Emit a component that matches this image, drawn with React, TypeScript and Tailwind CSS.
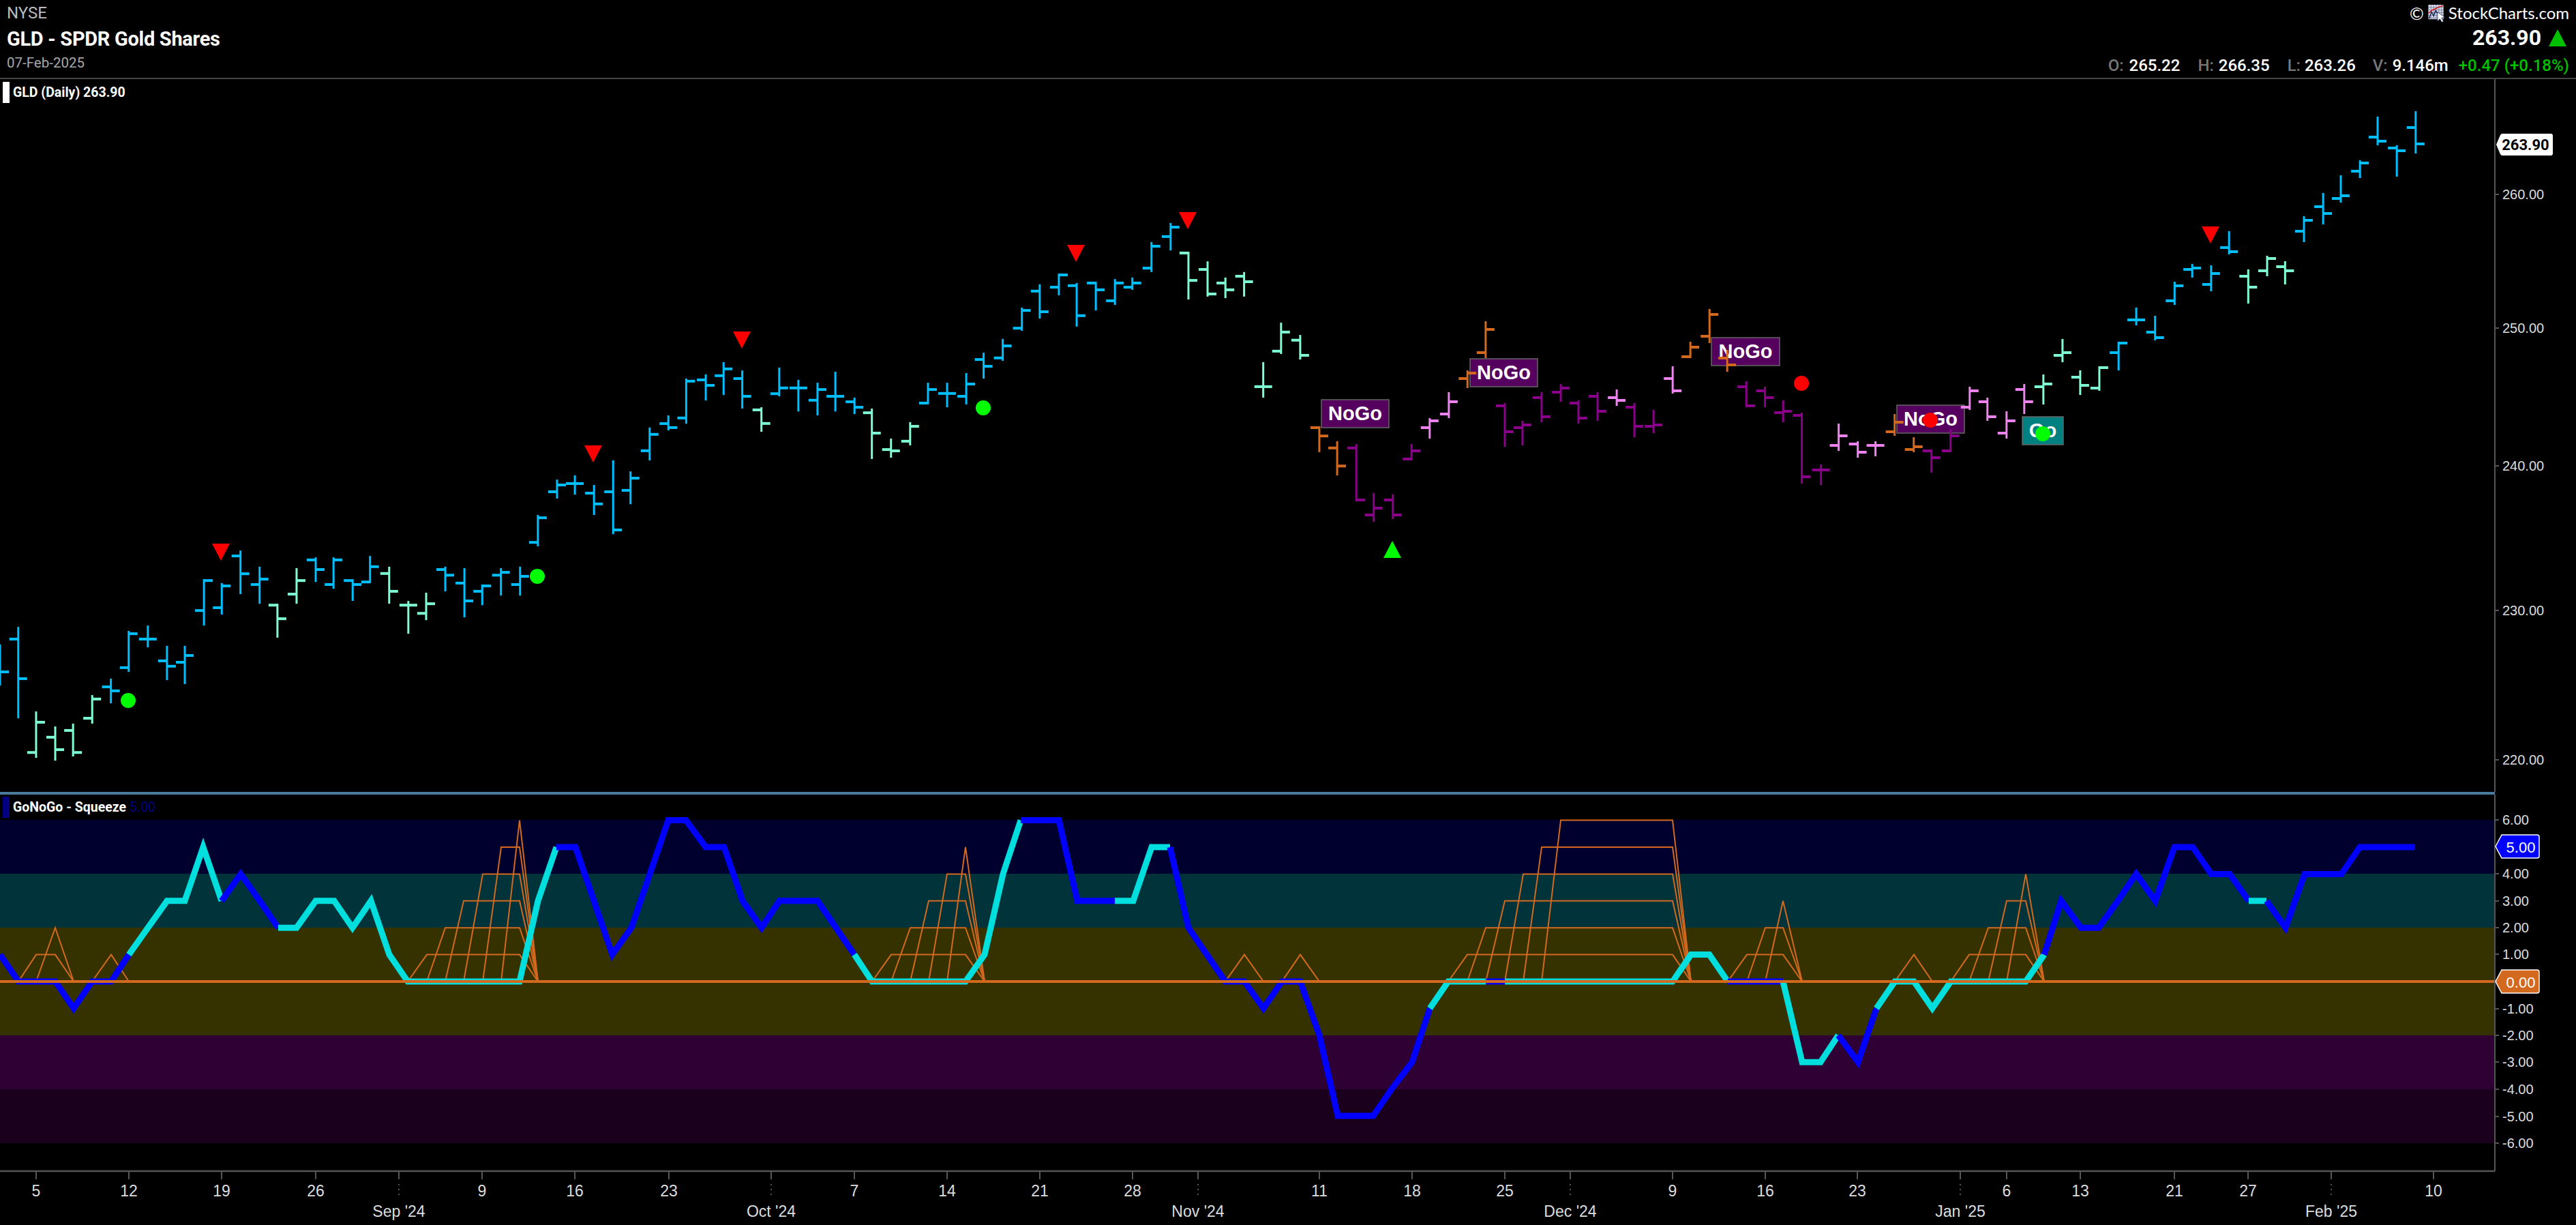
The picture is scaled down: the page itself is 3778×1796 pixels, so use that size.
const BLUE = "#00bfff";
const AQUA = "#7fffd4";
const ORANGE = "#d2691e";
const PURPLE = "#8b008b";
const VIOLET = "#ee82ee";

type Row = [number, number, number, number, number, string];

// bars were read off crops of the chart: [x, high, low, open, close, colour], scaled back to page pixels
const scaleRows = (ox: number, oy: number, fx: number, fy: number, rows: Row[]): Row[] =>
  rows.map(([x, h, l, o, c, col]) => [ox + x / fx, oy + h / fy, oy + l / fy, oy + o / fy, oy + c / fy, col]);

const bars: Row[] = [
  ...scaleRows(0, 500, 1.568, 2.412, [
    [0, 1073, 1218, 1170, 1170, BLUE],
    [42, 1011, 1334, 1054, 1194, BLUE],
    [83, 1310, 1474, 1455, 1348, AQUA],
    [127, 1363, 1484, 1401, 1445, AQUA],
    [168, 1353, 1469, 1377, 1455, AQUA],
    [212, 1252, 1353, 1334, 1266, AQUA],
    [255, 1194, 1281, 1223, 1237, BLUE],
    [296, 1025, 1170, 1155, 1035, BLUE],
    [340, 1006, 1083, 1054, 1054, BLUE],
    [384, 1078, 1199, 1131, 1150, BLUE],
    [425, 1078, 1213, 1136, 1112, BLUE],
    [469, 842, 1006, 953, 847, BLUE],
    [510, 856, 967, 943, 866, BLUE],
    [553, 741, 895, 760, 823, BLUE],
    [597, 798, 929, 861, 842, BLUE],
    [638, 929, 1049, 934, 982, AQUA],
    [682, 803, 929, 895, 847, AQUA],
    [726, 765, 852, 774, 808, BLUE],
    [767, 765, 876, 861, 774, BLUE],
    [811, 842, 919, 847, 861, BLUE],
    [851, 760, 856, 852, 798, BLUE],
    [895, 798, 929, 822, 885, AQUA],
    [939, 919, 1035, 934, 934, AQUA],
    [980, 890, 987, 963, 929, AQUA],
    [1024, 798, 885, 808, 828, BLUE],
    [1068, 803, 977, 856, 919, BLUE],
    [1109, 861, 934, 885, 866, BLUE],
    [1152, 803, 900, 828, 818, BLUE],
    [1196, 798, 900, 861, 832, BLUE],
    [1237, 615, 726, 712, 625, BLUE],
    [1281, 490, 557, 533, 509, BLUE],
    [1322, 475, 543, 504, 504, BLUE],
    [1366, 509, 615, 538, 576, BLUE],
    [1410, 422, 683, 533, 668, BLUE],
    [1450, 461, 577, 528, 485, BLUE],
    [1494, 306, 422, 388, 330, BLUE],
    [1537, 263, 316, 292, 306, BLUE],
  ]),
  ...scaleRows(1000, 250, 1.568, 2.613, [
    [10, 797, 970, 948, 807, BLUE],
    [55, 781, 881, 802, 823, BLUE],
    [96, 734, 860, 786, 760, BLUE],
    [139, 766, 912, 797, 865, BLUE],
    [183, 907, 1001, 917, 969, AQUA],
    [224, 755, 865, 855, 833, BLUE],
    [268, 802, 923, 833, 833, BLUE],
    [312, 813, 938, 880, 839, BLUE],
    [353, 771, 923, 865, 865, BLUE],
    [397, 870, 933, 886, 907, BLUE],
    [437, 912, 1105, 928, 1006, AQUA],
    [481, 1027, 1100, 1069, 1074, AQUA],
    [525, 964, 1053, 1037, 980, AQUA],
    [566, 813, 896, 891, 839, BLUE],
    [610, 813, 907, 854, 854, BLUE],
    [654, 776, 896, 865, 818, BLUE],
    [694, 698, 797, 724, 750, BLUE],
    [738, 645, 729, 718, 672, BLUE],
    [782, 525, 614, 604, 536, BLUE],
    [823, 436, 567, 462, 541, BLUE],
    [867, 395, 478, 447, 400, BLUE],
    [908, 431, 598, 441, 556, BLUE],
    [952, 426, 536, 431, 457, BLUE],
    [996, 416, 515, 499, 431, BLUE],
    [1036, 410, 457, 447, 431, BLUE],
    [1080, 274, 389, 374, 290, BLUE],
    [1124, 201, 306, 253, 217, BLUE],
    [1165, 311, 494, 316, 421, AQUA],
    [1209, 348, 483, 379, 473, AQUA],
    [1250, 410, 489, 431, 457, AQUA],
    [1293, 389, 483, 405, 426, AQUA],
    [1337, 734, 870, 828, 828, AQUA],
    [1378, 583, 703, 692, 619, AQUA],
    [1422, 630, 724, 650, 708, AQUA],
    [1466, 980, 1079, 985, 1017, ORANGE],
    [1507, 1037, 1168, 1063, 1132, ORANGE],
    [1551, 1048, 1267, 1063, 1262, PURPLE],
  ]),
  ...scaleRows(2000, 350, 1.4255, 3, [
    [21, 1119, 1245, 1215, 1185, PURPLE],
    [61, 1125, 1233, 1149, 1215, PURPLE],
    [100, 903, 975, 969, 933, PURPLE],
    [138, 789, 879, 831, 801, VIOLET],
    [178, 675, 789, 771, 717, VIOLET],
    [217, 579, 657, 615, 591, ORANGE],
    [255, 363, 525, 501, 399, ORANGE],
    [295, 723, 915, 735, 849, PURPLE],
    [332, 801, 909, 831, 819, PURPLE],
    [372, 675, 807, 699, 783, PURPLE],
    [412, 639, 717, 675, 657, PURPLE],
    [449, 711, 813, 723, 789, PURPLE],
    [489, 675, 801, 693, 759, PURPLE],
    [529, 663, 735, 699, 711, VIOLET],
    [566, 723, 873, 741, 825, PURPLE],
    [606, 753, 855, 825, 819, PURPLE],
    [646, 561, 681, 615, 669, VIOLET],
    [683, 453, 525, 519, 477, ORANGE],
    [723, 309, 459, 429, 333, ORANGE],
    [760, 489, 585, 525, 555, ORANGE],
    [800, 627, 741, 651, 735, PURPLE],
    [839, 651, 741, 669, 699, PURPLE],
    [877, 711, 807, 765, 759, PURPLE],
    [916, 765, 1077, 777, 1047, PURPLE],
    [956, 993, 1083, 1017, 1017, PURPLE],
    [993, 813, 933, 909, 867, VIOLET],
    [1033, 891, 963, 903, 939, VIOLET],
    [1070, 891, 957, 909, 909, VIOLET],
    [1110, 771, 867, 849, 807, ORANGE],
    [1150, 873, 939, 927, 915, ORANGE],
    [1187, 927, 1029, 933, 963, PURPLE],
    [1227, 837, 939, 933, 867, PURPLE],
    [1267, 651, 753, 741, 669, VIOLET],
    [1304, 699, 801, 717, 783, VIOLET],
    [1344, 759, 879, 855, 801, VIOLET],
    [1381, 639, 771, 663, 717, VIOLET],
    [1421, 597, 729, 651, 639, AQUA],
    [1461, 441, 543, 513, 501, AQUA],
    [1498, 579, 687, 609, 645, AQUA],
    [1538, 561, 669, 657, 567, AQUA],
  ]),
  ...scaleRows(3000, 100, 2.24, 3, [
    [240, 1203, 1329, 1251, 1209, BLUE],
    [298, 1053, 1131, 1107, 1107, BLUE],
    [360, 1089, 1197, 1161, 1185, BLUE],
    [424, 939, 1041, 1023, 957, BLUE],
    [482, 861, 921, 885, 879, BLUE],
    [544, 867, 981, 951, 903, BLUE],
    [603, 717, 819, 789, 807, BLUE],
    [666, 885, 1035, 915, 963, AQUA],
    [728, 825, 915, 891, 837, AQUA],
    [787, 849, 951, 873, 891, AQUA],
    [849, 651, 765, 717, 669, BLUE],
    [912, 549, 687, 609, 639, BLUE],
    [970, 471, 591, 573, 561, BLUE],
    [1033, 405, 483, 453, 417, BLUE],
    [1091, 213, 339, 303, 321, BLUE],
    [1154, 339, 477, 351, 363, BLUE],
    [1216, 189, 375, 261, 333, BLUE],
  ]),
];

const nogoLabels = [
  { x: 1938, y: 586, w: 99, h: 41, text: "NoGo", bg: "#55005f" },
  { x: 2156, y: 526, w: 99, h: 41, text: "NoGo", bg: "#55005f" },
  { x: 2510, y: 495, w: 100, h: 41, text: "NoGo", bg: "#55005f" },
  { x: 2782, y: 594, w: 99, h: 41, text: "NoGo", bg: "#55005f" },
  { x: 2966, y: 611, w: 60, h: 41, text: "Go", bg: "#008080" },
];

const redDown = [[324, 797], [870, 653], [1088, 486], [1578, 359], [1742, 311], [3242, 332]];
const dots = [
  [188, 1027, "#00ff00"],
  [788, 845, "#00ff00"],
  [1442, 598, "#00ff00"],
  [2642, 562, "#ff0000"],
  [2831, 616, "#ff0000"],
  [2996, 636, "#00ff00"],
] as const;

const priceTicks = [
  [260, 285],
  [250, 481],
  [240, 683],
  [230, 895],
  [220, 1114],
];

const LINE_BLUE = "#0000ff";
const LINE_CYAN = "#00dede";
const vy = (v: number) => 1439 - v * 39.4;

// oscillator: runs of [x, value], one colour per run, each run starts where the last one ended
const oscRuns: { color: string; pts: number[][] }[] = [
  { color: LINE_BLUE, pts: [[0, 1], [27, 0], [53, 0], [81, 0], [108, -1], [135, 0], [163, 0], [189, 1]] },
  { color: LINE_CYAN, pts: [[189, 1], [217, 2], [245, 3], [271, 3], [298, 5], [325, 3]] },
  { color: LINE_BLUE, pts: [[325, 3], [353, 4], [381, 3], [408, 2]] },
  {
    color: LINE_CYAN,
    pts: [[408, 2], [435, 2], [463, 3], [490, 3], [517, 2], [544, 3], [571, 1], [598, 0], [626, 0], [653, 0], [680, 0], [708, 0], [735, 0], [762, 0], [789, 3], [816, 5]],
  },
  {
    color: LINE_BLUE,
    pts: [[816, 5], [844, 5], [871, 3], [898, 1], [926, 2], [953, 4], [980, 6], [1006, 6], [1035, 5], [1062, 5], [1089, 3], [1117, 2], [1143, 3], [1171, 3], [1199, 3], [1226, 2], [1253, 1]],
  },
  { color: LINE_CYAN, pts: [[1253, 1], [1279, 0], [1307, 0], [1335, 0], [1362, 0], [1389, 0], [1416, 0], [1444, 1], [1471, 4], [1497, 6]] },
  { color: LINE_BLUE, pts: [[1497, 6], [1525, 6], [1553, 6], [1580, 3], [1608, 3], [1635, 3]] },
  { color: LINE_CYAN, pts: [[1635, 3], [1662, 3], [1689, 5], [1716, 5]] },
  {
    color: LINE_BLUE,
    pts: [[1716, 5], [1743, 2], [1770, 1], [1797, 0], [1825, 0], [1853, -1], [1880, 0], [1907, 0], [1935, -2], [1962, -5], [1989, -5], [2014, -5], [2041, -4], [2071, -3], [2097, -1]],
  },
  { color: LINE_CYAN, pts: [[2097, -1], [2124, 0], [2152, 0], [2179, 0]] },
  { color: LINE_BLUE, pts: [[2179, 0], [2207, 0]] },
  { color: LINE_CYAN, pts: [[2207, 0], [2453, 0], [2480, 1], [2507, 1], [2534, 0]] },
  { color: LINE_BLUE, pts: [[2534, 0], [2615, 0]] },
  { color: LINE_CYAN, pts: [[2615, 0], [2643, -3], [2670, -3], [2696, -2]] },
  { color: LINE_BLUE, pts: [[2696, -2], [2725, -3], [2752, -1]] },
  { color: LINE_CYAN, pts: [[2752, -1], [2779, 0], [2807, 0], [2834, -1], [2861, 0], [2971, 0], [2998, 1]] },
  {
    color: LINE_BLUE,
    pts: [[2998, 1], [3023, 3], [3052, 2], [3078, 2], [3106, 3], [3133, 4], [3161, 3], [3189, 5], [3216, 5], [3243, 4], [3270, 4], [3298, 3]],
  },
  { color: LINE_CYAN, pts: [[3298, 3], [3324, 3]] },
  { color: LINE_BLUE, pts: [[3324, 3], [3352, 2], [3380, 4], [3407, 4], [3434, 4], [3461, 5], [3489, 5], [3542, 5]] },
];

// squeeze ladders: xs[k] is where level k tops out, then flat to end, back to zero at drop
const squeezes = [
  { xs: [27, 53, 81], end: 81, drop: 108 },
  { xs: [135, 163], end: 163, drop: 189 },
  { xs: [598, 626, 653, 680, 708, 735, 762], end: 762, drop: 789 },
  { xs: [1279, 1307, 1335, 1362, 1389, 1416], end: 1416, drop: 1444 },
  { xs: [1797, 1825], end: 1825, drop: 1853 },
  { xs: [1880, 1907], end: 1907, drop: 1935 },
  { xs: [2124, 2152, 2179, 2207, 2234, 2261, 2289], end: 2453, drop: 2480 },
  { xs: [2534, 2562, 2589, 2615], end: 2615, drop: 2643 },
  { xs: [2779, 2807], end: 2807, drop: 2834 },
  { xs: [2861, 2888, 2916, 2943, 2971], end: 2971, drop: 2998 },
];

const bands = [
  { top: 1202, bottom: 1281, color: "#00002e" },
  { top: 1281, bottom: 1360, color: "#00343a" },
  { top: 1360, bottom: 1518, color: "#363200" },
  { top: 1518, bottom: 1597, color: "#2e0033" },
  { top: 1597, bottom: 1676, color: "#1b001e" },
];

const oscTicks = [
  [6, 1202],
  [4, 1281],
  [3, 1321],
  [2, 1360],
  [1, 1399],
  [-1, 1479],
  [-2, 1518],
  [-3, 1557],
  [-4, 1597],
  [-5, 1637],
  [-6, 1676],
];

const dayTicks: [number, string][] = [
  [53, "5"], [189, "12"], [325, "19"], [463, "26"], [707, "9"], [843, "16"], [981, "23"],
  [1253, "7"], [1389, "14"], [1525, "21"], [1661, "28"], [1935, "11"],
  [2071, "18"], [2207, "25"], [2453, "9"], [2589, "16"], [2724, "23"], [2943, "6"],
  [3051, "13"], [3189, "21"], [3297, "27"], [3569, "10"],
];

const monthTicks: [number, string][] = [
  [585, "Sep '24"],
  [1131, "Oct '24"],
  [1757, "Nov '24"],
  [2303, "Dec '24"],
  [2875, "Jan '25"],
  [3419, "Feb '25"],
];

function StockChartsMark() {
  return (
    <svg viewBox="0 0 26 28" className="h-[27px] w-[26px]">
      <rect x="0" y="1" width="23" height="22" fill="#d8dcec" />
      <path d="M0 5H23M0 9H23M0 13H23M0 17H23M0 21H23M4 1V23M8 1V23M12 1V23M16 1V23M20 1V23" stroke="#6a7290" strokeWidth="0.8" />
      <path d="M0 14L6 9L11 7L17 4L23 2" fill="none" stroke="#d01818" strokeWidth="1.6" />
      <path d="M1 22L5 12L8 18L11 10L15 15" fill="none" stroke="#12204c" strokeWidth="1.4" />
      <path d="M14 12L14 26L17.5 22.5L20.5 27.5L23 26L20 21L25 20Z" fill="#fff" stroke="#1a2a60" strokeWidth="0.8" />
    </svg>
  );
}

function Header() {
  return (
    <header className="flex h-[116px] shrink-0 justify-between border-b-2 border-[#444] px-[10px]">
      <div className="flex flex-col [font-family:Roboto,sans-serif]">
        <div className="mt-[3px] h-[32px] text-[24px] leading-[32px] text-[#bbbbbb]">NYSE</div>
        <div className="h-[44px] text-[29px] font-bold leading-[44px] tracking-[-0.3px] text-white">GLD - SPDR Gold Shares</div>
        <div className="h-[26px] text-[20.5px] leading-[26px] text-[#a8a8a8]">07-Feb-2025</div>
      </div>
      <div className="flex flex-col items-end [font-family:Roboto,sans-serif]">
        <div className="mt-[4px] flex h-[30px] items-center gap-[4px] [font-family:Lato,sans-serif] text-[24px] leading-[30px] text-white">
          <span className="mr-[2px] text-[25px]">©</span>
          <StockChartsMark />
          <span>StockCharts.com</span>
        </div>
        <div className="mr-[4px] mt-[3px] flex h-[36px] items-center gap-[11px]">
          <span className="text-[32px] font-bold leading-[36px] text-white">263.90</span>
          <span className="h-0 w-0 border-x-[13px] border-b-[25px] border-x-transparent border-b-[#00c000]" />
        </div>
        <div className="mt-[8px] flex h-[30px] items-center text-[24px] font-medium leading-[30px] text-white">
          <span className="text-[#777777]">O:</span>
          <span className="ml-[8px]">265.22</span>
          <span className="ml-[26px] text-[#777777]">H:</span>
          <span className="ml-[7px]">266.35</span>
          <span className="ml-[26px] text-[#777777]">L:</span>
          <span className="ml-[6px]">263.26</span>
          <span className="ml-[25px] text-[#777777]">V:</span>
          <span className="ml-[7px]">9.146m</span>
          <span className="ml-[15px] text-[#00c000]">+0.47</span>
          <span className="ml-[6px] text-[#00c000]">(+0.18%)</span>
        </div>
      </div>
    </header>
  );
}

function PricePanel() {
  return (
    <div className="relative h-[1045px] shrink-0">
      <div className="absolute left-[4px] top-[4px] flex h-[31px] items-center gap-[5px] [font-family:Roboto,sans-serif] text-[19.5px] font-bold text-white">
        <span className="h-[31px] w-[10px] bg-white" />
        <span>GLD (Daily) 263.90</span>
      </div>
      <svg viewBox="0 116 3778 1045" className="block h-[1045px] w-[3778px]">
        <line x1="3659" y1="116" x2="3659" y2="1161" stroke="#555" strokeWidth="2" />
        {priceTicks.map(([price, y]) => (
          <g key={price}>
            <line x1="3659" y1={y} x2="3665" y2={y} stroke="#555" strokeWidth="2" />
            <text x="3670" y={y + 7} className="fill-[#dddddd] text-[20px] [font-family:'Liberation_Sans',sans-serif]">
              {price.toFixed(2)}
            </text>
          </g>
        ))}
        {nogoLabels.map((label) => (
          <g key={label.x}>
            <rect x={label.x} y={label.y} width={label.w} height={label.h} fill={label.bg} stroke="#666" strokeWidth="1.5" />
            <text
              x={label.x + label.w / 2}
              y={label.y + 30}
              textAnchor="middle"
              className="fill-white text-[29px] font-bold [font-family:'Liberation_Sans',sans-serif]"
            >
              {label.text}
            </text>
          </g>
        ))}
        {bars.map(([x, h, l, o, c, color], i) => (
          <g key={i} fill={color}>
            <rect x={x - 1.5} y={h} width="3" height={l - h} />
            <rect x={x - 13} y={o - 2} width="13" height="4" />
            <rect x={x} y={c - 2} width="13" height="4" />
          </g>
        ))}
        {redDown.map(([x, y]) => (
          <polygon key={x} points={`${x - 13},${y} ${x + 13},${y} ${x},${y + 25}`} fill="#ff0000" />
        ))}
        <polygon points="2029,818 2055,818 2042,793" fill="#00ff00" />
        {dots.map(([x, y, fill]) => (
          <circle key={x} cx={x} cy={y} r="11" fill={fill} />
        ))}
        <path d="M3661 212L3667 198Q3668 196 3670 196H3741Q3744 196 3744 199V225Q3744 228 3741 228H3670Q3668 228 3667 226Z" fill="#fff" />
        <text x="3704" y="220" textAnchor="middle" className="fill-black text-[22px] font-bold [font-family:Roboto,sans-serif]">
          263.90
        </text>
      </svg>
    </div>
  );
}

function ValueTag({ y, fill, text }: { y: number; fill: string; text: string }) {
  return (
    <g>
      <path
        d={`M3660 ${y}L3669 ${y - 17}H3721Q3724 ${y - 17} 3724 ${y - 14}V${y + 14}Q3724 ${y + 17} 3721 ${y + 17}H3669Z`}
        fill={fill}
        stroke="#fff"
        strokeWidth="1.5"
      />
      <text x="3697" y={y + 9} textAnchor="middle" className="fill-white text-[22px] font-medium [font-family:'Liberation_Sans',sans-serif]">
        {text}
      </text>
    </g>
  );
}

function OscillatorPanel() {
  return (
    <div className="relative min-h-0 flex-1">
      <div className="absolute left-[4px] top-[3px] flex h-[31px] items-center gap-[5px] [font-family:Roboto,sans-serif] text-[19.5px] font-bold text-white">
        <span className="h-[31px] w-[10px] bg-[#000080]" />
        <span>GoNoGo - Squeeze</span>
        <span className="font-normal text-[#000080]">5.00</span>
      </div>
      <svg viewBox="0 1165 3778 631" className="block h-[631px] w-[3778px]">
        {bands.map((band) => (
          <rect key={band.top} x="0" y={band.top} width="3659" height={band.bottom - band.top} fill={band.color} />
        ))}
        {squeezes.flatMap((sq) =>
          sq.xs.slice(1).map((x, k) => (
            <polyline
              key={`${sq.xs[0]}-${k}`}
              points={`${sq.xs[k]},${vy(0)} ${x},${vy(k + 1)} ${sq.end},${vy(k + 1)} ${sq.drop},${vy(0)}`}
              fill="none"
              stroke={ORANGE}
              strokeWidth="2"
            />
          )),
        )}
        {oscRuns.map((run, i) => (
          <polyline
            key={i}
            points={run.pts.map(([x, v]) => `${x},${vy(v)}`).join(" ")}
            fill="none"
            stroke={run.color}
            strokeWidth="9"
            strokeLinejoin="miter"
            strokeMiterlimit="10"
          />
        ))}
        <line x1="0" y1={vy(0)} x2="3659" y2={vy(0)} stroke={ORANGE} strokeWidth="4" />
        <line x1="3659" y1="1165" x2="3659" y2="1717" stroke="#555" strokeWidth="2" />
        <line x1="0" y1="1717" x2="3659" y2="1717" stroke="#555" strokeWidth="2.5" />
        {oscTicks.map(([v, y]) => (
          <g key={v}>
            <line x1="3659" y1={y} x2="3665" y2={y} stroke="#555" strokeWidth="2" />
            <text x="3670" y={y + 7} className="fill-[#dddddd] text-[20px] [font-family:'Liberation_Sans',sans-serif]">
              {v.toFixed(2)}
            </text>
          </g>
        ))}
        <ValueTag y={1241} fill="#0000ff" text="5.00" />
        <ValueTag y={1439} fill={ORANGE} text="0.00" />
        {dayTicks.map(([x, text]) => (
          <g key={x}>
            <line x1={x} y1="1717" x2={x} y2="1729" stroke="#555" strokeWidth="2" />
            <text x={x} y="1754" textAnchor="middle" className="fill-[#dddddd] text-[23px] [font-family:'Liberation_Sans',sans-serif]">
              {text}
            </text>
          </g>
        ))}
        {monthTicks.map(([x, text]) => (
          <g key={x}>
            <line x1={x} y1="1717" x2={x} y2="1729" stroke="#555" strokeWidth="2" />
            <line x1={x} y1="1736" x2={x} y2="1754" stroke="#555" strokeWidth="2" strokeDasharray="2 5" />
            <text x={x} y="1784" textAnchor="middle" className="fill-[#dddddd] text-[23px] [font-family:'Liberation_Sans',sans-serif]">
              {text}
            </text>
          </g>
        ))}
      </svg>
    </div>
  );
}

export default function App() {
  return (
    <div className="flex h-[1796px] w-[3778px] flex-col overflow-hidden bg-black">
      <Header />
      <PricePanel />
      <div className="h-[4px] w-[3659px] shrink-0 bg-[#4a7a9c]" />
      <OscillatorPanel />
    </div>
  );
}
